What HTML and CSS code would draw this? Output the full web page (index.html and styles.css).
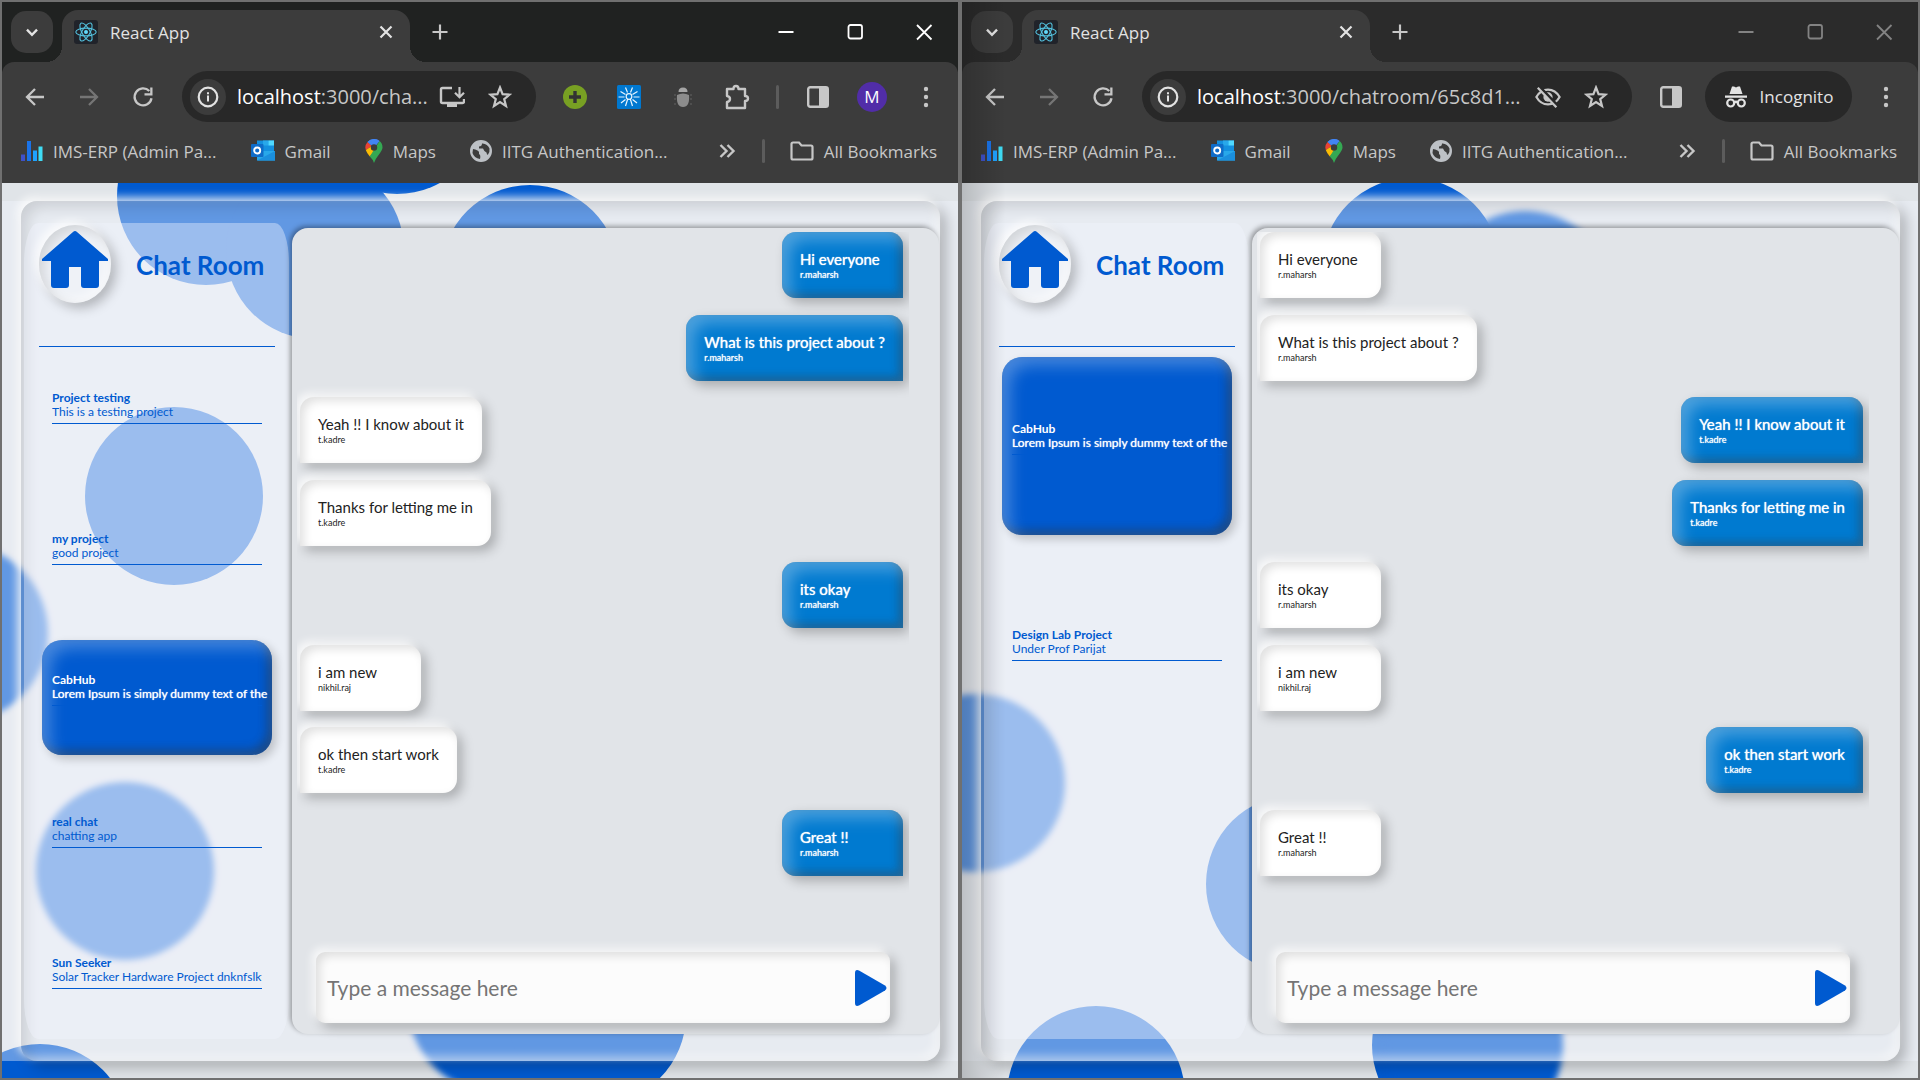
FILE: index.html
```html
<!DOCTYPE html>
<html lang="en">
<head>
<meta charset="utf-8">
<meta name="viewport" content="width=device-width, initial-scale=1">
<title>React App</title>
<link rel="stylesheet" href="styles.css">
</head>
<body>
<svg class="sprite" aria-hidden="true">
  <symbol id="chevron" viewBox="0 0 24 24"><path d="M6.500 9.500 12 15l5.500-5.500" fill="none" stroke="currentColor" stroke-width="2.600"/></symbol>
  <symbol id="react" viewBox="0 0 24 24"><rect width="24" height="24" rx="3" fill="#20232a"/><g fill="none" stroke="#53c1de" stroke-width="1.100"><ellipse cx="12" cy="12" rx="10.200" ry="3.900"/><ellipse cx="12" cy="12" rx="10.200" ry="3.900" transform="rotate(60 12 12)"/><ellipse cx="12" cy="12" rx="10.200" ry="3.900" transform="rotate(120 12 12)"/></g><circle cx="12" cy="12" r="2" fill="#61dafb"/></symbol>
  <symbol id="close" viewBox="0 0 24 24"><path d="m6.500 6.500 11 11m0-11-11 11" fill="none" stroke="currentColor" stroke-width="2.200"/></symbol>
  <symbol id="plus" viewBox="0 0 24 24"><path d="M12 3v18M3 12h18" fill="none" stroke="currentColor" stroke-width="2.600"/></symbol>
  <symbol id="min" viewBox="0 0 24 24"><path d="M4.500 12h15" stroke="currentColor" stroke-width="2"/></symbol>
  <symbol id="max" viewBox="0 0 24 24"><rect x="5.500" y="5" width="13.500" height="13.500" rx="2" fill="none" stroke="currentColor" stroke-width="1.800"/></symbol>
  <symbol id="quit" viewBox="0 0 24 24"><path d="m5 5 14.500 14.500m0-14.500L5 19.500" stroke="currentColor" stroke-width="1.800"/></symbol>
  <symbol id="arrow" viewBox="0 0 24 24"><path d="M21 12H4.500M12 4l-8 8 8 8" fill="none" stroke="currentColor" stroke-width="2.300"/></symbol>
  <symbol id="reload" viewBox="0 0 24 24"><path d="M20.500 13.200A8.500 8.500 0 1 1 18.300 6" fill="none" stroke="currentColor" stroke-width="2.300"/><path d="M21.500 2.500v8h-8V8.200h5.700V2.500z" fill="currentColor"/></symbol>
  <symbol id="info" viewBox="0 0 24 24"><circle cx="12" cy="12" r="9.300" fill="none" stroke="currentColor" stroke-width="2.200"/><path d="M11 10.500h2v6h-2zM11 7.300h2v2h-2z" fill="currentColor"/></symbol>
  <symbol id="install" viewBox="0 0 26 24"><path d="M13 3H3.500Q2 3 2 4.500v12Q2 18 3.500 18h20q1.500 0 1.500-1.500V14" fill="none" stroke="currentColor" stroke-width="2.400"/><path d="M8 18h10v4H8z" fill="currentColor"/><path d="M20.500 2v10m-4.500-4.300 4.500 4.500L25 7.700" fill="none" stroke="currentColor" stroke-width="2.200"/></symbol>
  <symbol id="star" viewBox="0 0 24 24"><path d="m12 2.500 2.600 6.600 7 .5-5.400 4.500 1.800 6.900-6-3.900-6 3.900 1.800-6.900L2.400 9.600l7-.5z" fill="none" stroke="currentColor" stroke-width="2.200"/></symbol>
  <symbol id="eyeoff" viewBox="0 0 28 24"><path d="M1.500 12Q6 4 14 4t12.500 8Q22 20 14 20T1.500 12z" fill="none" stroke="currentColor" stroke-width="2.400"/><circle cx="14" cy="12" r="5" fill="currentColor"/><path d="m5 1 20 21" stroke="#282828" stroke-width="3"/><path d="m3 2 20 21" stroke="currentColor" stroke-width="2.400"/></symbol>
  <symbol id="addon" viewBox="0 0 24 24"><circle cx="12" cy="12" r="12" fill="#78a023"/><path d="M12 6v12M6 12h12" stroke="#333" stroke-width="3.400"/></symbol>
  <symbol id="rays" viewBox="0 0 24 24"><rect width="24" height="24" rx="1.500" fill="#0078d0"/><g fill="none" stroke="#e8f6ff" stroke-width="1.200"><circle cx="12" cy="11.500" r="2.800"/><path d="m10.700 14-2.200 7M13.300 14l2.200 7M7.500 12H1.500m15 0h6M8.500 9.500 3.500 6.500M15.500 9.500l5-3M10.500 7.500 8.500 2.500M13.500 7.500l2-5M8.500 14.500l-4.500 3.500m11.500-3.500 4.500 3.500"/></g></symbol>
  <symbol id="bug" viewBox="0 0 24 24"><path d="M7.500 7q0-4.500 4.500-4.500T16.500 7z" fill="#a5a5a5"/><path d="M6 10q6-3 12 0 1 12-6 12T6 10z" fill="#8c8c8c"/><path d="M3 10h2m14 0h2M3 14h2m14 0h2M3 19h2m14 0h2" stroke="#555" stroke-width="1.500"/></symbol>
  <symbol id="puzzle" viewBox="0 0 26 26"><path d="M3 5h6.500q0-3 2.500-3t2.500 3H21v7q3 0 3 2.500t-3 2.500v7H3v-6q3-.5 3-3t-3-3z" fill="none" stroke="currentColor" stroke-width="2.400" stroke-linejoin="round"/></symbol>
  <symbol id="panel" viewBox="0 0 24 24"><rect x="2.200" y="2.200" width="19.600" height="19.600" rx="2" fill="none" stroke="currentColor" stroke-width="2.400"/><path d="M13 2h9v20h-9z" fill="currentColor"/></symbol>
  <symbol id="dots" viewBox="0 0 24 24"><g fill="currentColor"><circle cx="12" cy="4" r="2.200"/><circle cx="12" cy="12" r="2.200"/><circle cx="12" cy="20" r="2.200"/></g></symbol>
  <symbol id="spy" viewBox="0 0 24 24"><path d="M8 1.500h2l2 1 2-1h2L18.500 9h-13zM1 10.500h22v2.300H1z" fill="currentColor"/><g fill="none" stroke="currentColor" stroke-width="2.200"><circle cx="6.700" cy="18" r="3.500"/><circle cx="17.300" cy="18" r="3.500"/><path d="M10 17.500q2-1.500 4 0"/></g></symbol>
  <symbol id="bars" viewBox="0 0 22 22"><path d="M0 14.500h4V21H0z" fill="#3f51c8"/><path d="M6 1h4v20H6z" fill="#1a73e8"/><path d="M12 10.500h4V21h-4z" fill="#1fa2ff"/><path d="M17.500 6.500h4V21h-4z" fill="#3fdcf5"/></symbol>
  <symbol id="outlook" viewBox="0 0 24 24"><path d="M6 1.500h17V14H6z" fill="#1490df"/><path d="M12 1.500h5.500v5H12z" fill="#28a8ea"/><path d="M17.500 1.500H23v5h-5.500z" fill="#50d9ff"/><path d="M6 12h18v9.500H6z" fill="#28a8ea"/><path d="m24 12-18 9.500h18z" fill="#1b8fdd"/><rect y="5" width="12.500" height="13" rx="1" fill="#0f6cc8"/><circle cx="6.200" cy="11.500" r="3" fill="none" stroke="#fff" stroke-width="1.900"/></symbol>
  <symbol id="maps" viewBox="0 0 18 24"><path d="M9 0a8.500 8.500 0 0 0-6.500 3L9 8.500 14.500 2A8.500 8.500 0 0 0 9 0z" fill="#4285f4"/><path d="M2.500 3A8.500 8.500 0 0 0 .8 11L7 7z" fill="#ea4335"/><path d="M.8 11q1 3 4 6.500L14 7 7 7z" fill="#fbbc04"/><path d="M4.800 17.500Q8 20.500 9 24q1-3.500 4.200-7.500Q17.500 11 17.500 8.500 17.500 4 14.500 2z" fill="#34a853"/><path d="M14.500 2 9 8.500 2.500 3A8.500 8.500 0 0 1 14.500 2z" fill="#4285f4"/><circle cx="9" cy="8.500" r="3.200" fill="#3c3c3c"/></symbol>
  <symbol id="globe" viewBox="0 0 22 22"><circle cx="11" cy="11" r="10" fill="#bdc1c6" stroke="#bdc1c6" stroke-width="2"/><path d="M3 9q5 1 6 3v2q2 1 1 5-6-1-7.500-6zM12 3.500q0 3-3 3v2h4q1 3 3.500 4 .5 3 1.500 2 2-3 1.500-6-2-4.500-7-5z" fill="#3c3c3c"/></symbol>
  <symbol id="more" viewBox="0 0 24 24"><path d="m5.500 6 6 6-6 6m7-12 6 6-6 6" fill="none" stroke="currentColor" stroke-width="2.400"/></symbol>
  <symbol id="folder" viewBox="0 0 24 24"><path d="M1.500 19V5q0-1.500 1.500-1.500h6l2.500 3H21q1.500 0 1.500 1.500v11q0 1.500-1.500 1.500H3q-1.500 0-1.500-1.500z" fill="none" stroke="currentColor" stroke-width="2.200"/></symbol>
  <symbol id="home" viewBox="0 0 66 57"><path d="M31 1q2-2 4 0l31 27v2H57v24q0 3-3 3H42q-3 0-3-3V36H27v18q0 3-3 3H12q-3 0-3-3V30H0v-2z" fill="currentColor"/></symbol>
  <symbol id="send" viewBox="0 0 32 36"><path d="M0 3q0-4 4-2.500l26 15q3 2.500 0 5l-26 15Q0 37 0 33z" fill="currentColor"/></symbol>
</svg>

<main class="desktop">
  <section class="window active">
    <header class="chrome">
      <div class="tabs">
        <button class="tab-search" aria-label="Search tabs"><svg><use href="#chevron"/></svg></button>
        <div class="tab"><svg><use href="#react"/></svg><span class="tab-title">React App</span><button aria-label="Close tab"><svg><use href="#close"/></svg></button></div>
        <button class="new-tab" aria-label="New tab"><svg><use href="#plus"/></svg></button>
        <div class="controls"><button aria-label="Minimize"><svg><use href="#min"/></svg></button><button aria-label="Maximize"><svg><use href="#max"/></svg></button><button aria-label="Close"><svg><use href="#quit"/></svg></button></div>
      </div>
      <nav class="toolbar">
        <div class="nav"><button aria-label="Back"><svg><use href="#arrow"/></svg></button><button class="forward" aria-label="Forward"><svg><use href="#arrow"/></svg></button><button aria-label="Reload"><svg><use href="#reload"/></svg></button></div>
        <div class="omnibox"><button class="site-info" aria-label="Site information"><svg><use href="#info"/></svg></button><span class="url"><b>localhost</b>:3000/cha...</span><button aria-label="Install"><svg class="wide"><use href="#install"/></svg></button><button aria-label="Bookmark"><svg><use href="#star"/></svg></button></div>
        <div class="actions"><button aria-label="Add"><svg><use href="#addon"/></svg></button><button aria-label="Insights"><svg><use href="#rays"/></svg></button><button aria-label="Debugger"><svg><use href="#bug"/></svg></button><button aria-label="Extensions"><svg class="wide"><use href="#puzzle"/></svg></button></div>
        <i class="rule"></i>
        <div class="actions last"><button aria-label="Side panel"><svg><use href="#panel"/></svg></button><button class="avatar">M</button><button aria-label="Menu"><svg><use href="#dots"/></svg></button></div>
      </nav>
      <nav class="bookmarks">
        <a href="#"><svg><use href="#bars"/></svg>IMS-ERP (Admin Pa...</a><a href="#"><svg><use href="#outlook"/></svg>Gmail</a><a href="#"><svg class="slim"><use href="#maps"/></svg>Maps</a><a href="#"><svg><use href="#globe"/></svg>IITG Authentication...</a>
        <button class="overflow" aria-label="More bookmarks"><svg><use href="#more"/></svg></button><i class="rule"></i><a href="#"><svg class="folder"><use href="#folder"/></svg>All Bookmarks</a>
      </nav>
    </header>
    <div class="page">
      <div class="bubbles"><i class="a1"></i><i class="a2"></i><i class="a3"></i><i class="a4"></i><i class="a5 soft"></i><i class="a6"></i><i class="a7 soft"></i><i class="a8"></i><i class="a9 soft"></i><i class="a10"></i></div>
      <div class="band"><div class="panel">
        <aside class="sidebar">
          <header><a class="home" href="#" aria-label="Home"><svg><use href="#home"/></svg></a><h1>Chat Room</h1></header>
          <div class="rooms">
            <button class="room"><strong>Project testing</strong><span>This is a testing project</span></button>
            <button class="room"><strong>my project</strong><span>good project</span></button>
            <button class="room selected"><strong>CabHub</strong><span>Lorem Ipsum is simply dummy text of the</span></button>
            <button class="room"><strong>real chat</strong><span>chatting app</span></button>
            <button class="room"><strong>Sun Seeker</strong><span>Solar Tracker Hardware Project dnknfslkf</span></button>
          </div>
        </aside>
        <section class="chat">
          <div class="messages">
            <div class="msg mine"><p>Hi everyone</p><small>r.maharsh</small></div>
            <div class="msg mine"><p>What is this project about ?</p><small>r.maharsh</small></div>
            <div class="msg"><p>Yeah !! I know about it</p><small>t.kadre</small></div>
            <div class="msg"><p>Thanks for letting me in</p><small>t.kadre</small></div>
            <div class="msg mine"><p>its okay</p><small>r.maharsh</small></div>
            <div class="msg"><p>i am new</p><small>nikhil.raj</small></div>
            <div class="msg"><p>ok then start work</p><small>t.kadre</small></div>
            <div class="msg mine"><p>Great !!</p><small>r.maharsh</small></div>
          </div>
          <form class="composer"><input type="text" aria-label="Message" placeholder="Type a message here"><button type="button" aria-label="Send"><svg><use href="#send"/></svg></button></form>
        </section>
      </div></div>
    </div>
  </section>

  <section class="window behind">
    <header class="chrome">
      <div class="tabs">
        <button class="tab-search" aria-label="Search tabs"><svg><use href="#chevron"/></svg></button>
        <div class="tab"><svg><use href="#react"/></svg><span class="tab-title">React App</span><button aria-label="Close tab"><svg><use href="#close"/></svg></button></div>
        <button class="new-tab" aria-label="New tab"><svg><use href="#plus"/></svg></button>
        <div class="controls"><button aria-label="Minimize"><svg><use href="#min"/></svg></button><button aria-label="Maximize"><svg><use href="#max"/></svg></button><button aria-label="Close"><svg><use href="#quit"/></svg></button></div>
      </div>
      <nav class="toolbar">
        <div class="nav"><button aria-label="Back"><svg><use href="#arrow"/></svg></button><button class="forward" aria-label="Forward"><svg><use href="#arrow"/></svg></button><button aria-label="Reload"><svg><use href="#reload"/></svg></button></div>
        <div class="omnibox"><button class="site-info" aria-label="Site information"><svg><use href="#info"/></svg></button><span class="url"><b>localhost</b>:3000/chatroom/65c8d1...</span><button aria-label="Tracking blocked"><svg class="wide"><use href="#eyeoff"/></svg></button><button aria-label="Bookmark"><svg><use href="#star"/></svg></button></div>
        <div class="actions private"><button aria-label="Side panel"><svg><use href="#panel"/></svg></button><button class="incognito"><svg><use href="#spy"/></svg>Incognito</button><button aria-label="Menu"><svg><use href="#dots"/></svg></button></div>
      </nav>
      <nav class="bookmarks">
        <a href="#"><svg><use href="#bars"/></svg>IMS-ERP (Admin Pa...</a><a href="#"><svg><use href="#outlook"/></svg>Gmail</a><a href="#"><svg class="slim"><use href="#maps"/></svg>Maps</a><a href="#"><svg><use href="#globe"/></svg>IITG Authentication...</a>
        <button class="overflow" aria-label="More bookmarks"><svg><use href="#more"/></svg></button><i class="rule"></i><a href="#"><svg class="folder"><use href="#folder"/></svg>All Bookmarks</a>
      </nav>
    </header>
    <div class="page">
      <div class="bubbles"><i class="b1"></i><i class="b2 soft"></i><i class="b3 soft"></i><i class="b4"></i><i class="b5"></i><i class="b6"></i><i class="b7 soft"></i></div>
      <div class="band"><div class="panel">
        <aside class="sidebar">
          <header><a class="home" href="#" aria-label="Home"><svg><use href="#home"/></svg></a><h1>Chat Room</h1></header>
          <div class="rooms few">
            <button class="room selected"><strong>CabHub</strong><span>Lorem Ipsum is simply dummy text of the</span></button>
            <button class="room"><strong>Design Lab Project</strong><span>Under Prof Parijat</span></button>
          </div>
        </aside>
        <section class="chat">
          <div class="messages">
            <div class="msg"><p>Hi everyone</p><small>r.maharsh</small></div>
            <div class="msg"><p>What is this project about ?</p><small>r.maharsh</small></div>
            <div class="msg mine"><p>Yeah !! I know about it</p><small>t.kadre</small></div>
            <div class="msg mine"><p>Thanks for letting me in</p><small>t.kadre</small></div>
            <div class="msg"><p>its okay</p><small>r.maharsh</small></div>
            <div class="msg"><p>i am new</p><small>nikhil.raj</small></div>
            <div class="msg mine"><p>ok then start work</p><small>t.kadre</small></div>
            <div class="msg"><p>Great !!</p><small>r.maharsh</small></div>
          </div>
          <form class="composer"><input type="text" aria-label="Message" placeholder="Type a message here"><button type="button" aria-label="Send"><svg><use href="#send"/></svg></button></form>
        </section>
      </div></div>
    </div>
  </section>
</main>
</body>
</html>
```
FILE: styles.css
```css
* { box-sizing: border-box; }
body { margin: 0; font-family: "Open Sans", sans-serif; }
button { border: 0; padding: 0; background: none; color: inherit; font: inherit; display: flex; align-items: center; justify-content: center; }
a { color: inherit; text-decoration: none; }
p, h1 { margin: 0; }
svg { display: block; width: 24px; height: 24px; flex: none; }
.sprite { position: absolute; width: 0; height: 0; }

.desktop { display: grid; grid-template-columns: 1fr 1fr; min-height: 100vh; }
.window { position: relative; display: flex; flex-direction: column; border: 2px solid #707070; background: #3c3c3c; min-width: 0; }
.behind::after { content: ""; position: absolute; inset: 0 auto 0 0; width: 44px; background: linear-gradient(90deg, rgba(0,0,0,.18), transparent); pointer-events: none; }

/* browser frame */
.chrome { --strip: #202221; color: #c7c7c7; }
.behind .chrome { --strip: #2b2b2b; }
.tabs { display: flex; align-items: center; height: 60px; padding-left: 9px; background: var(--strip); }
.tab-search { width: 42px; height: 42px; border-radius: 15px; background: #3c3c3c; color: #e3e3e3; }
.tab-search svg { width: 22px; height: 22px; }
.tab { position: relative; display: flex; align-items: center; gap: 12px; width: 348px; height: 52px; margin: 8px 0 0 9px; padding: 0 12px 8px; border-radius: 16px 16px 0 0; background: #3c3c3c; color: #e3e3e3; font-size: 17px; }
.tab::before, .tab::after { content: ""; position: absolute; bottom: 0; width: 16px; height: 16px; }
.tab::before { right: 100%; background: radial-gradient(circle at 0 0, transparent 16px, #3c3c3c 16px); }
.tab::after { left: 100%; background: radial-gradient(circle at 100% 0, transparent 16px, #3c3c3c 16px); }
.tab-title { flex: 1; }
.new-tab { margin-left: 20px; width: 20px; }
.new-tab svg { width: 20px; height: 20px; }
.controls { display: flex; gap: 45px; margin-left: auto; padding-right: 22px; color: #fff; }
.behind .controls { color: #838383; }
.toolbar { position: relative; display: flex; align-items: center; height: 69px; background: linear-gradient(var(--strip) 10px, transparent 10px); z-index: 0; }
.toolbar::before { content: ""; position: absolute; inset: 0; z-index: -1; border-radius: 12px 12px 0 0; background: #3c3c3c; }
.nav { display: flex; gap: 30px; padding: 0 27px 0 21px; }
.forward { color: #757575; transform: scaleX(-1); }
.omnibox { display: flex; align-items: center; flex: 1; height: 51px; padding: 0 24px 0 8px; border-radius: 26px; background: #282828; gap: 23px; min-width: 0; }
.site-info { width: 36px; height: 36px; border-radius: 50%; background: #3c3c3c; color: #e3e3e3; }
.url { flex: 1; margin: 0 -13px 0 -12px; font-size: 20px; white-space: nowrap; overflow: hidden; color: #c7c7c7; }
.url b { font-weight: 400; color: #fff; }
.wide { width: 26px; height: 26px; }
.actions { display: flex; align-items: center; gap: 30px; margin-left: 27px; }
.actions .wide { margin-left: -1px; }
.rule { width: 3px; height: 24px; border-radius: 2px; background: #5c5c5c; }
.toolbar .rule { margin-left: 26px; }
.last { margin: 0 20px 0 27px; gap: 27px; }
.avatar { width: 30px; height: 30px; border-radius: 50%; background: #512da8; color: #fff; font-size: 17px; }
.private { margin: 0 20px 0 27px; gap: 22px; }
.incognito { width: 147px; height: 51px; gap: 12px; border-radius: 26px; background: #282828; color: #e3e3e3; font-size: 17px; }
.bookmarks { display: flex; align-items: center; height: 52px; padding: 0 21px 12px 19px; font-size: 17px; gap: 34px; white-space: nowrap; }
.bookmarks a { display: flex; align-items: center; gap: 10px; }
.bookmarks .slim { width: 18px; }
.bookmarks a:first-child svg, .bookmarks a:nth-child(4) svg { width: 22px; height: 22px; }
.overflow { margin-left: auto; margin-right: -11px; }
.bookmarks .rule { margin-right: -9px; }

/* chat page */
.page { position: relative; flex: 1; display: flex; flex-direction: column; padding: 18px 0 17px; background: #e0e4e8; overflow: hidden; font-family: Lato, sans-serif; color: #005ad0; }
.bubbles i { position: absolute; width: 178px; height: 178px; border-radius: 50%; background: #005ad0; }
.bubbles .soft { filter: blur(3px); }
.a1 { left: 115px; top: -76px; }
.a2 { left: 224px; top: -22px; }
.a3 { left: 306px; top: -167px; }
.a4 { left: 439px; top: 2px; }
.a5 { left: -132px; top: 361px; }
.a6 { left: 83px; top: 224px; }
.a7 { left: 34px; top: 599px; }
.a8 { left: -51px; top: 861px; }
.a9 { left: 406px; top: 732px; }
.a10 { left: 506px; top: 743px; }
.b1 { left: 360px; top: -5px; }
.b2 { left: 474px; top: 28px; }
.b3 { left: -75px; top: 511px; }
.b4 { left: 244px; top: 612px; }
.b5 { left: 45px; top: 823px; }
.b6 { left: 410px; top: 773px; }
.b7 { left: 423px; top: 773px; }
.band { position: relative; flex: 1; display: flex; padding: 0 18px 0 19px; background: rgba(242,244,255,.4); }
.panel { flex: 1; display: flex; gap: 3px; min-width: 0; padding: 22px 1px 22px 3px; border-radius: 16px; box-shadow: -4px -4px 8px rgba(255,255,255,.8), 6px 6px 14px rgba(0,0,0,.25), inset 6px 6px 14px rgba(0,0,0,.12), inset -5px -5px 10px rgba(255,255,255,.5); }
.sidebar { flex: none; display: flex; flex-direction: column; width: 265px; padding: 2px 14px 0 15px; border-radius: 14px / 40px; background: rgba(242,246,255,.4); }
.sidebar header { display: flex; align-items: flex-start; gap: 25px; height: 122px; border-bottom: 1px solid; }
.home { display: flex; justify-content: center; flex: none; width: 72px; height: 78px; padding-top: 6px; border-radius: 50%; background: rgba(255,255,255,.2); box-shadow: -4px -4px 8px rgba(255,255,255,.8), 5px 5px 12px rgba(0,0,0,.25), inset 5px 5px 12px rgba(0,0,0,.12), inset -5px -5px 10px rgba(255,255,255,.5); }
.home svg { width: 66px; height: 57px; }
h1 { padding-top: 22px; font-size: 26px; line-height: 36px; font-weight: 700; white-space: nowrap; }
.rooms { flex: 1; display: grid; grid-auto-rows: 1fr; gap: 26px; padding: 10px 3px 1px; }
.few { grid-auto-rows: 178px; gap: 28px; align-content: start; }
.room { flex-direction: column; align-items: stretch; min-width: 0; padding: 0 10px 15px; border-radius: 20px; text-align: left; font-size: 12px; line-height: 14px; }
.room span { padding-bottom: 4px; border-bottom: 1px solid #005ad0; white-space: nowrap; overflow: hidden; }
.selected { background: #005ad0; color: #fff; box-shadow: inset 8px 8px 16px rgba(255,255,255,.28), inset -5px -5px 10px rgba(50,50,50,.45), 4px 4px 10px rgba(0,0,0,.2); }
.room.selected span { overflow: visible; text-shadow: 0 0 1px #fff; }
.chat { flex: 1; display: flex; flex-direction: column; min-width: 0; margin: 5px 0; border-radius: 16px; background: #e1e4e8; box-shadow: -2px -2px 5px rgba(0,0,0,.35); }
.messages { flex: 1; display: flex; flex-direction: column; align-items: flex-start; margin: 4px 30px 0 5px; padding: 0 6px 0 3px; overflow: hidden; }
.msg { flex: none; min-width: 121px; height: 66px; margin-bottom: 16px; padding: 18px; border-radius: 14px 14px 14px 0; background: #fff; color: #222; font-size: 15px; line-height: 18px; box-shadow: -4px -4px 8px rgba(255,255,255,.8), 5px 5px 12px rgba(0,0,0,.25), inset 4px 4px 10px rgba(0,0,0,.12); }
.msg:nth-child(odd) { margin-bottom: 17px; }
.msg small { display: block; font-size: 9px; line-height: 14px; }
.mine { align-self: flex-end; border-radius: 14px 14px 0 14px; background: #007ad0; color: #fff; text-shadow: 0 0 1px #fff; box-shadow: 5px 5px 12px rgba(0,0,0,.25), inset 8px 8px 16px rgba(255,255,255,.3), inset -4px -4px 8px rgba(50,50,50,.4); }
.composer { display: flex; align-items: center; height: 71px; margin: 0 49px 11px 24px; padding: 0 3px 0 11px; border-radius: 9px; background: #fcfcfc; box-shadow: -4px -4px 8px rgba(255,255,255,.8), 5px 5px 12px rgba(0,0,0,.25), inset 4px 4px 10px rgba(0,0,0,.12); }
.composer input { flex: 1; min-width: 0; padding: 0; border: 0; background: none; outline: 0; font: 21px/28px Lato, sans-serif; color: #222; }
.composer input::placeholder { color: #757575; opacity: 1; }
.composer button { color: #005ad0; }
.composer svg { width: 32px; height: 36px; }
```
